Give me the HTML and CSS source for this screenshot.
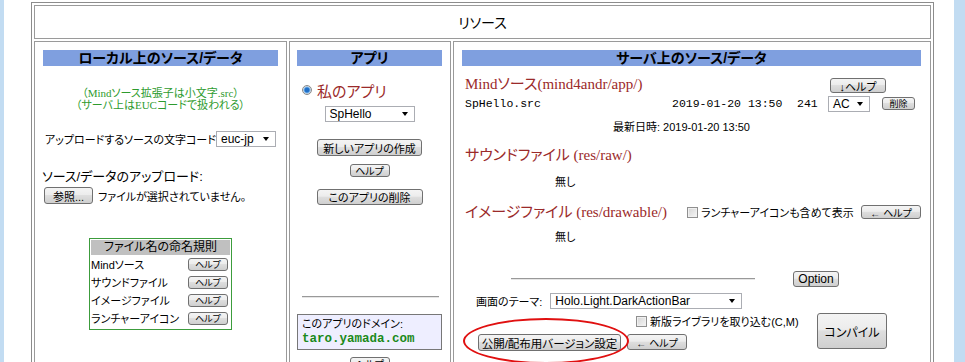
FILE: index.html
```html
<!DOCTYPE html>
<html lang="ja">
<head>
  <meta charset="UTF-8">
  <meta name="viewport" content="width=device-width, initial-scale=1.0">
  <title>リソース</title>
  <link rel="stylesheet" href="styles.css">
</head>
<body>
  <div class="page">
    <div class="frame">
      <div class="title-cell">リソース</div>

      <div class="columns">
        <!-- ローカル -->
        <section class="cell local">
          <h2 class="bar">ローカル上のソース/データ</h2>
          <p class="note">（Mindソース拡張子は小文字.src）<br>（サーバ上はEUCコードで扱われる）</p>

          <div class="code-row">
            <span>アップロードするソースの文字コード</span>
            <span class="select select-euc">euc-jp</span>
          </div>

          <p class="upload-label">ソース/データのアップロード:</p>
          <div class="file-row">
            <button class="btn btn-browse">参照...</button>
            <span>ファイルが選択されていません。</span>
          </div>

          <div class="rules">
            <div class="rules-head">ファイル名の命名規則</div>
            <div class="rule"><span>Mindソース</span><button class="btn btn-tiny">ヘルプ</button></div>
            <div class="rule"><span>サウンドファイル</span><button class="btn btn-tiny">ヘルプ</button></div>
            <div class="rule"><span>イメージファイル</span><button class="btn btn-tiny">ヘルプ</button></div>
            <div class="rule"><span>ランチャーアイコン</span><button class="btn btn-tiny">ヘルプ</button></div>
          </div>
        </section>

        <!-- アプリ -->
        <section class="cell app">
          <h2 class="bar">アプリ</h2>
          <div class="radio-row">
            <span class="radio"></span>
            <span class="red-title">私のアプリ</span>
          </div>
          <span class="select select-app">SpHello</span>
          <button class="btn btn-new">新しいアプリの作成</button>
          <button class="btn btn-help-sm">ヘルプ</button>
          <button class="btn btn-del-app">このアプリの削除</button>
          <div class="rule-line app-line"></div>
          <div class="domain">
            <div>このアプリのドメイン:</div>
            <div class="domain-name">taro.yamada.com</div>
          </div>
          <button class="btn btn-help-sm btn-domain-help">ヘルプ</button>
        </section>

        <!-- サーバ -->
        <section class="cell server">
          <h2 class="bar">サーバ上のソース/データ</h2>
          <div class="server-body">
            <div class="mind-head">
              <span class="red-title">Mindソース(mind4andr/app/)</span>
              <button class="btn btn-down-help">↓ヘルプ</button>
            </div>
            <div class="src-row">
              <span class="mono src-name">SpHello.src</span>
              <span class="mono src-date">2019-01-20 13:50</span>
              <span class="mono src-size">241</span>
              <span class="select select-ac">AC</span>
              <button class="btn btn-del">削除</button>
            </div>
            <div class="latest">最新日時: 2019-01-20 13:50</div>

            <div class="sec-title red-title">サウンドファイル (res/raw/)</div>
            <div class="none none-sound">無し</div>

            <div class="image-row">
              <span class="red-title image-title">イメージファイル (res/drawable/)</span>
              <span class="check"></span>
              <span class="check-label">ランチャーアイコンも含めて表示</span>
              <button class="btn btn-arrow-help">← ヘルプ</button>
            </div>
            <div class="none none-image">無し</div>

            <div class="option-row">
              <div class="rule-line server-line"></div>
              <button class="btn btn-option">Option</button>
            </div>
            <div class="theme-row">
              <span>画面のテーマ:</span>
              <span class="select select-theme">Holo.Light.DarkActionBar</span>
            </div>

            <div class="bottom">
              <div class="bottom-left">
                <div class="lib-row">
                  <span class="check"></span>
                  <span>新版ライブラリを取り込む(C,M)</span>
                </div>
                <div class="publish-row">
                  <button class="btn btn-publish">公開/配布用バージョン設定</button>
                  <button class="btn btn-arrow-help2">← ヘルプ</button>
                </div>
              </div>
              <button class="btn btn-compile">コンパイル</button>
            </div>
          </div>
          <div class="mark"></div>
        </section>
      </div>
    </div>
  </div>
</body>
</html>
```

FILE: styles.css
```css
:root {
  --bar-color: #7f9fdf;
  --red-text: #9b2a2a;
  --green-text: #2e9b2e;
  --line-color: #9a9a9a;
  --gothic: "Liberation Sans", "Noto Sans CJK JP", sans-serif;
  --mincho: "Liberation Serif", "Noto Sans CJK JP", serif;
  --mono: "Liberation Mono", "Noto Sans CJK JP", monospace;
}

* {
  box-sizing: border-box;
}

body {
  margin: 0;
  height: 362px;
  overflow: hidden;
  background-color: #c2dcf2;
  font-family: var(--gothic);
  font-size: 11px;
  font-feature-settings: "palt";
  white-space: nowrap;
  color: #000;
}

.page {
  margin-left: 4px;
  width: 950px;
  height: 362px;
  background-color: #fff;
  padding: 2px 0 0 27px;
}

.frame {
  width: 903px;
  border: 1px solid #8c8c8c;
  padding: 2px;
  display: flex;
  flex-direction: column;
  gap: 2px;
}

.title-cell {
  height: 34px;
  border: 1px solid var(--line-color);
  display: flex;
  align-items: center;
  justify-content: center;
  font-size: 14px;
}

.columns {
  display: grid;
  grid-template-columns: 253px 162px 478px;
  gap: 2px;
}

.cell {
  border: 1px solid var(--line-color);
  height: 330px;
  padding: 8px;
  display: flex;
  flex-direction: column;
}

.bar {
  margin: 0;
  height: 16px;
  line-height: 16px;
  background-color: var(--bar-color);
  font-size: 14px;
  font-weight: bold;
  text-align: center;
}

/* ボタン */
.btn {
  font-family: var(--gothic);
  font-size: 11px;
  font-feature-settings: "palt";
  white-space: nowrap;
  color: #000;
  border: 1px solid #707070;
  border-radius: 3px;
  background: linear-gradient(#f4f4f4 0%, #ececec 45%, #dedede 50%, #cfcfcf 100%);
  padding: 0;
  display: flex;
  align-items: center;
  justify-content: center;
  flex: none;
}

.select {
  display: flex;
  align-items: center;
  border: 1px solid #abadb3;
  background-color: #fff;
  font-family: "Liberation Sans", sans-serif;
  font-size: 12px;
  padding-left: 4px;
  flex: none;
}

.select::after {
  content: "";
  margin-left: auto;
  margin-right: 6px;
  border-left: 3.5px solid transparent;
  border-right: 3.5px solid transparent;
  border-top: 4px solid #000;
}

.check {
  width: 11px;
  height: 11px;
  border: 1px solid #8f8f8f;
  background: linear-gradient(135deg, #d4d4d4, #f6f6f6);
  box-shadow: inset 0 0 0 1px #f0f0f0;
  flex: none;
}

.radio {
  width: 10px;
  height: 10px;
  border-radius: 50%;
  border: 1px solid #8a8a8a;
  background: radial-gradient(circle, #1f6fc8 0 2px, #7db6ea 3px, #e6e6e6 4px);
  flex: none;
}

.red-title {
  font-family: var(--mincho);
  font-size: 15px;
  color: var(--red-text);
}

.mono {
  font-family: var(--mono);
  font-size: 11.5px;
}

.rule-line {
  height: 2px;
  border-top: 1px solid #999;
  border-bottom: 1px solid #e6e6e6;
}

/* ローカル */
.note {
  margin: 21px 0 0;
  font-family: var(--mincho);
  font-size: 11px;
  line-height: 12px;
  color: var(--green-text);
  text-align: center;
}

.code-row {
  margin-top: 20px;
  height: 16px;
  padding-left: 2px;
  display: flex;
  align-items: center;
}

.select-euc {
  margin-left: auto;
  margin-right: 3px;
  width: 60px;
  height: 16px;
}

.upload-label {
  margin: 22px 0 0 -1px;
  font-size: 13px;
  line-height: 16px;
}

.file-row {
  margin-top: 2px;
  height: 17px;
  display: flex;
  align-items: center;
  gap: 5px;
}

.btn-browse {
  margin-left: 1px;
  width: 49px;
  height: 17px;
}

.rules {
  margin: 34px auto 0;
  width: 143px;
  border: 1px solid #3c9c3c;
  padding: 1px 1px 2px;
}

.rules-head {
  height: 15px;
  line-height: 15px;
  background-color: #c0c0c0;
  text-align: center;
  font-size: 12px;
}

.rule {
  height: 18px;
  display: flex;
  align-items: center;
  justify-content: space-between;
  padding-right: 2px;
}

.btn-tiny {
  width: 40px;
  height: 13px;
  font-size: 9px;
}

/* アプリ */
.app {
  padding-left: 7px;
}

.radio-row {
  margin-top: 15px;
  height: 18px;
  padding-left: 5px;
  display: flex;
  align-items: center;
  gap: 5px;
}

.select-app {
  margin: 7px auto 0;
  width: 90px;
  height: 16px;
}

.btn-new {
  margin: 17px auto 0;
  width: 105px;
  height: 17px;
}

.btn-help-sm {
  margin: 8px auto 0;
  width: 40px;
  height: 13px;
  font-size: 10px;
}

.btn-del-app {
  margin: 12px auto 0;
  width: 106px;
  height: 16px;
}

.app-line {
  margin: 91px 3px 0 5px;
}

.domain {
  margin-top: 16px;
  height: 36px;
  border: 1px solid #777;
  background-color: #eeeeff;
  padding: 2px 4px;
  line-height: 14px;
}

.domain-name {
  font-family: var(--mono);
  font-size: 12.5px;
  font-weight: bold;
  color: #1a8a1a;
  line-height: 17px;
}

.btn-domain-help {
  margin-top: 7px;
}

/* サーバ */
.server {
  position: relative;
  padding-right: 9px;
}

.server-body {
  padding-left: 3px;
  display: flex;
  flex-direction: column;
}

.mind-head {
  margin-top: 9px;
  height: 18px;
  display: flex;
  align-items: flex-start;
}

.mind-head .red-title {
  line-height: 18px;
}

.btn-down-help {
  margin: 3px 35px 0 auto;
  width: 56px;
  height: 15px;
}

.src-row {
  margin-top: 2px;
  height: 17px;
  display: flex;
  align-items: center;
}

.src-name {
  width: 207px;
}

.src-date {
  width: 107px;
}

.src-size {
  margin-left: 18px;
  width: 20px;
}

.select-ac {
  margin-left: 11px;
  width: 42px;
  height: 16px;
}

.btn-del {
  margin-left: 12px;
  width: 33px;
  height: 13px;
  font-size: 9px;
}

.latest {
  margin-top: 8px;
  padding-left: 148px;
  height: 14px;
  line-height: 14px;
  font-size: 11px;
}

.sec-title {
  margin-top: 12px;
  height: 18px;
  line-height: 18px;
}

.none {
  padding-left: 90px;
  height: 14px;
  line-height: 14px;
}

.none-sound {
  margin-top: 11px;
}

.image-row {
  margin-top: 14px;
  height: 18px;
  display: flex;
  align-items: center;
}

.image-title {
  width: 222px;
  line-height: 18px;
}

.check-label {
  margin-left: 3px;
  width: 150px;
}

.btn-arrow-help {
  margin-left: 10px;
  width: 60px;
  height: 14px;
  font-size: 10px;
}

.none-image {
  margin-top: 9px;
}

.option-row {
  margin-top: 27px;
  height: 16px;
  display: flex;
  align-items: center;
}

.server-line {
  margin-left: 46px;
  width: 244px;
}

.btn-option {
  margin-left: 38px;
  width: 46px;
  height: 16px;
  font-family: "Liberation Sans", sans-serif;
  font-size: 12px;
}

.theme-row {
  margin-top: 6px;
  height: 16px;
  padding-left: 11px;
  display: flex;
  align-items: center;
  gap: 6px;
}

.select-theme {
  margin-left: 2px;
  width: 192px;
  height: 16px;
}

.bottom {
  display: flex;
  align-items: flex-start;
}

.bottom-left {
  width: 352px;
}

.lib-row {
  margin-top: 5px;
  height: 14px;
  padding-left: 171px;
  display: flex;
  align-items: center;
  gap: 3px;
}

.publish-row {
  margin-top: 6px;
  padding-left: 13px;
  display: flex;
  gap: 6px;
}

.btn-publish {
  width: 143px;
  height: 17px;
  font-size: 11.5px;
}

.btn-arrow-help2 {
  width: 60px;
  height: 16px;
  font-size: 10px;
}

.btn-compile {
  margin-top: 4px;
  width: 70px;
  height: 36px;
  font-size: 12px;
}

/* 赤い丸印 */
.mark {
  position: absolute;
  left: 9px;
  top: 276px;
  width: 166px;
  height: 46px;
  border: 2px solid #e01010;
  border-radius: 50%;
}
```
